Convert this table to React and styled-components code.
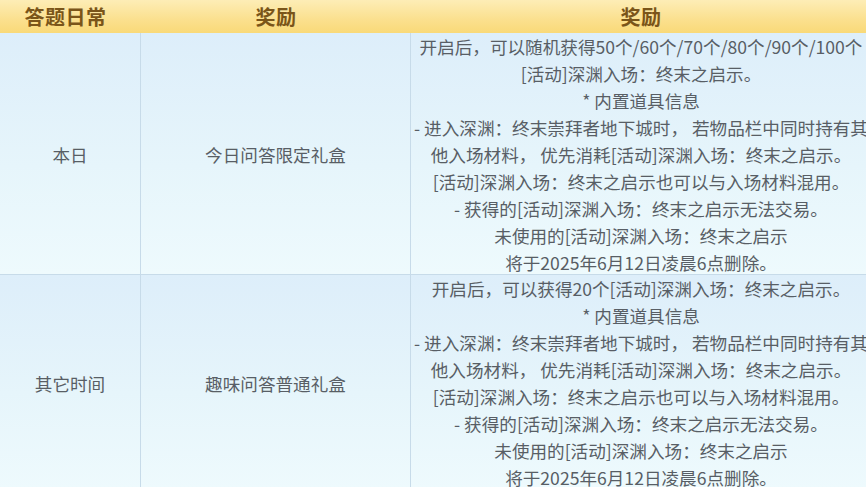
import React from 'react'
import styled, {createGlobalStyle} from 'styled-components'

const Global = createGlobalStyle`
    html, body {
        margin: 0;
        padding: 0;
        overflow: hidden;
        background: #e6f4fb;
    }
    body {
        font-family: "Microsoft YaHei", "Noto Sans CJK SC", "Noto Sans", sans-serif;
    }
`;

const Table = styled.div`
    display: grid;
    grid-template-columns: 141px 270px 460px;
    width: 871px;
`;

const Head = styled.div`
    height: 33px;
    display: flex;
    align-items: center;
    justify-content: center;
    background: linear-gradient(to bottom, #fdedb6 0%, #fbe08e 60%, #f9d978 100%);
    color: #7a5519;
    font-size: 20px;
    font-weight: 700;
    letter-spacing: 0.5px;
    padding-right: ${props => props.shift || 0}px;
`;

const Cell = styled.div`
    display: flex;
    flex-direction: column;
    align-items: center;
    justify-content: center;
    height: ${props => props.height}px;
    background: linear-gradient(to bottom, #ddeefa 0%, #e6f5fb 55%, #eefafd 100%);
    border-right: ${props => props.last ? 'none' : '1px solid #c7dbe9'};
    border-bottom: 1px solid #c7dbe9;
    box-sizing: border-box;
    color: #585e65;
    font-size: 17.6px;
    line-height: 27px;
    padding-top: 1px;
    overflow: visible;
`;

const Line = styled.div`
    white-space: nowrap;
    text-align: center;
`;

const rows = [
    {
        name: '本日',
        box: '今日问答限定礼盒',
        height: 242,
        lines: [
            '开启后，可以随机获得50个/60个/70个/80个/90个/100个',
            '[活动]深渊入场：终末之启示。',
            '* 内置道具信息',
            '- 进入深渊：终末崇拜者地下城时， 若物品栏中同时持有其',
            '他入场材料， 优先消耗[活动]深渊入场：终末之启示。',
            '[活动]深渊入场：终末之启示也可以与入场材料混用。',
            '- 获得的[活动]深渊入场：终末之启示无法交易。',
            '未使用的[活动]深渊入场：终末之启示',
            '将于2025年6月12日凌晨6点删除。',
        ],
    },
    {
        name: '其它时间',
        box: '趣味问答普通礼盒',
        height: 216,
        lines: [
            '开启后，可以获得20个[活动]深渊入场：终末之启示。',
            '* 内置道具信息',
            '- 进入深渊：终末崇拜者地下城时， 若物品栏中同时持有其',
            '他入场材料， 优先消耗[活动]深渊入场：终末之启示。',
            '[活动]深渊入场：终末之启示也可以与入场材料混用。',
            '- 获得的[活动]深渊入场：终末之启示无法交易。',
            '未使用的[活动]深渊入场：终末之启示',
            '将于2025年6月12日凌晨6点删除。',
        ],
    },
];

export default function App() {
    return (
        <React.Fragment>
            <Global/>
            <Table>
                <Head shift={10}>答题日常</Head>
                <Head>奖励</Head>
                <Head>奖励</Head>
                {rows.map((r, index) => (
                    <React.Fragment key={index}>
                        <Cell height={r.height}><Line>{r.name}</Line></Cell>
                        <Cell height={r.height}><Line>{r.box}</Line></Cell>
                        <Cell height={r.height} last>
                            {r.lines.map((l, i) => <Line key={i}>{l}</Line>)}
                        </Cell>
                    </React.Fragment>
                ))}
            </Table>
        </React.Fragment>
    )
}
